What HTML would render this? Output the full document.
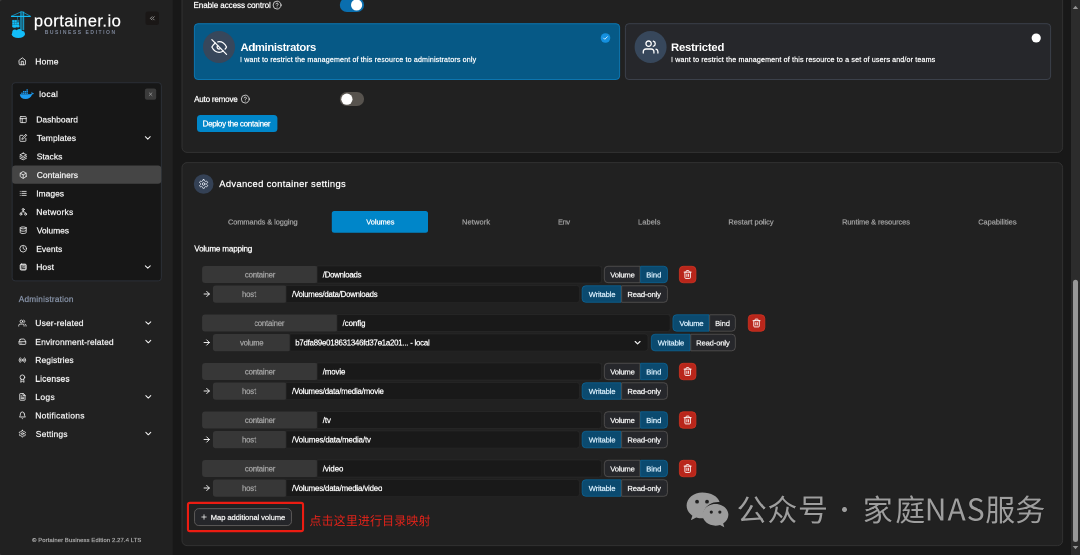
<!DOCTYPE html>
<html lang="zh">
<head>
<meta charset="utf-8">
<title>Portainer</title>
<style>
*{box-sizing:border-box;margin:0;padding:0}
html,body{width:1080px;height:555px;overflow:hidden;background:#181818}
body{position:relative;font-family:"Liberation Sans","Noto Sans CJK SC",sans-serif;color:#fff;font-size:8px}
#bg{position:absolute;left:0;top:0;width:1080px;height:555px}
#tx{position:absolute;left:0;top:0;width:2160px;height:1110px;transform:scale(0.5);transform-origin:0 0;will-change:transform}
.t{position:absolute;white-space:nowrap;-webkit-text-stroke:0.5px currentColor}
</style>
</head>
<body>
<svg id="bg" viewBox="0 0 1080 555">
<rect x="0.00" y="0.00" width="172.80" height="555.00" fill="#212121"/>
<path d="M0 0H2.600A2.600 2.600 0 0 0 0 2.600Z" fill="#3c3c3c"/>
<path d="M0 555H2.600A2.600 2.600 0 0 1 0 552.400Z" fill="#343434"/>
<g transform="translate(10 10)" fill="#13bef9" stroke="none">
<path d="M11.800 1.500 L20.600 6.300 L1.100 6.300 Z" fill="none" stroke="#13bef9" stroke-width="0.650" stroke-linejoin="round"/>
<rect x="1.100" y="5.950" width="19.500" height="1"/>
<rect x="10.700" y="1.800" width="3.200" height="18.400" opacity="0.400"/>
<rect x="10.500" y="1.600" width="0.750" height="18.600"/><rect x="13.400" y="1.600" width="0.750" height="18.600"/>
<rect x="7.400" y="7" width="0.550" height="2.600" opacity="0.800"/>
<rect x="2.200" y="9.900" width="7.200" height="6.600" opacity="0.500"/>
<rect x="2.400" y="10.200" width="1.900" height="1.900"/><rect x="4.700" y="10.200" width="1.900" height="1.900"/>
<rect x="2.400" y="12.500" width="1.900" height="1.900"/><rect x="4.700" y="12.500" width="1.900" height="1.900"/><rect x="7.100" y="12.500" width="1.900" height="1.900"/>
<rect x="2.400" y="14.800" width="6.800" height="1.700"/>
<ellipse cx="4.600" cy="16.600" rx="2.400" ry="1.200"/><ellipse cx="8" cy="16.500" rx="1.600" ry="0.900"/>
<ellipse cx="8.300" cy="24.300" rx="6.500" ry="3.800"/><circle cx="4.800" cy="22" r="2.500"/><circle cx="9.300" cy="21.700" r="2.700"/><circle cx="12.500" cy="23.400" r="2.300"/>
</g>
<rect x="145.50" y="11.50" width="13.50" height="13.50" fill="#1a1716" rx="2.5"/>
<g style="color:#c9c9c9" transform="translate(148.55 14.55) scale(0.3125)" fill="none" stroke="#c9c9c9" stroke-width="2.2" stroke-linecap="round" stroke-linejoin="round"><polyline points="11 17 6 12 11 7"/><polyline points="18 17 13 12 18 7"/></g>
<g style="color:#f5f5f5" transform="translate(18.15 57.15) scale(0.3458)" fill="none" stroke="#f5f5f5" stroke-width="2.4" stroke-linecap="round" stroke-linejoin="round"><path d="m3 9 9-7 9 7v11a2 2 0 0 1-2 2H5a2 2 0 0 1-2-2z"/><polyline points="9 22 9 12 15 12 15 22"/></g>
<rect x="12.15" y="82.75" width="149.20" height="198.10" fill="#171717" rx="3" stroke="#323843" stroke-width="0.7"/>
<g transform="translate(19.800 89.200) scale(0.480)" fill="#1d9bf0">
<path d="M0 10.500h21.500c1.500 0 2.600-.5 3.300-1.600-.6-1-.6-2.400.1-3.500 1.200.8 1.600 1.800 1.700 2.800 1-.2 2 0 2.600.5-.6 1.400-1.900 2.200-3.700 2.300C23.500 17 19 20.500 12 20.500 4.500 20.500.5 16.500 0 10.500z"/>
<rect x="3" y="7" width="3" height="2.800"/><rect x="6.600" y="7" width="3" height="2.800"/><rect x="10.200" y="7" width="3" height="2.800"/><rect x="13.800" y="7" width="3" height="2.800"/>
<rect x="6.600" y="3.600" width="3" height="2.800"/><rect x="10.200" y="3.600" width="3" height="2.800"/><rect x="13.800" y="3.600" width="3" height="2.800"/><rect x="13.800" y="0.200" width="3" height="2.800"/>
</g>
<rect x="144.90" y="88.50" width="11.30" height="11.30" fill="#3b3b3b" rx="2"/>
<g style="color:#bdbdbd" transform="translate(147.85 91.45) scale(0.2292)" fill="none" stroke="#bdbdbd" stroke-width="2.4" stroke-linecap="round" stroke-linejoin="round"><line x1="18" y1="6" x2="6" y2="18"/><line x1="6" y1="6" x2="18" y2="18"/></g>
<rect x="12.10" y="165.50" width="149.10" height="18.30" fill="#454545" rx="3.2"/>
<g style="color:#f5f5f5" transform="translate(19.20 115.60) scale(0.3333)" fill="none" stroke="#f5f5f5" stroke-width="2.4" stroke-linecap="round" stroke-linejoin="round"><rect width="18" height="18" x="3" y="3" rx="2"/><path d="M3 9h18"/><path d="M9 21V9"/></g>
<g style="color:#f5f5f5" transform="translate(19.20 134.00) scale(0.3333)" fill="none" stroke="#f5f5f5" stroke-width="2.4" stroke-linecap="round" stroke-linejoin="round"><path d="M11 4H4a2 2 0 0 0-2 2v14a2 2 0 0 0 2 2h14a2 2 0 0 0 2-2v-7"/><path d="M18.5 2.5a2.121 2.121 0 0 1 3 3L12 15l-4 1 1-4 9.5-9.5z"/></g>
<g style="color:#f2f2f2" transform="translate(142.90 133.00) scale(0.4083)" fill="none" stroke="#f2f2f2" stroke-width="2.5" stroke-linecap="round" stroke-linejoin="round"><polyline points="6 9 12 15 18 9"/></g>
<g style="color:#f5f5f5" transform="translate(19.20 152.50) scale(0.3333)" fill="none" stroke="#f5f5f5" stroke-width="2.4" stroke-linecap="round" stroke-linejoin="round"><polygon points="12 2 2 7 12 12 22 7 12 2"/><polyline points="2 17 12 22 22 17"/><polyline points="2 12 12 17 22 12"/></g>
<g style="color:#f5f5f5" transform="translate(19.20 170.90) scale(0.3333)" fill="none" stroke="#f5f5f5" stroke-width="2.4" stroke-linecap="round" stroke-linejoin="round"><path d="M21 16V8a2 2 0 0 0-1-1.73l-7-4a2 2 0 0 0-2 0l-7 4A2 2 0 0 0 3 8v8a2 2 0 0 0 1 1.73l7 4a2 2 0 0 0 2 0l7-4A2 2 0 0 0 21 16z"/><polyline points="3.27 6.96 12 12.01 20.73 6.96"/><line x1="12" y1="22.08" x2="12" y2="12"/></g>
<g style="color:#f5f5f5" transform="translate(19.20 189.40) scale(0.3333)" fill="none" stroke="#f5f5f5" stroke-width="2.4" stroke-linecap="round" stroke-linejoin="round"><line x1="8" y1="6" x2="21" y2="6"/><line x1="8" y1="12" x2="21" y2="12"/><line x1="8" y1="18" x2="21" y2="18"/><line x1="3" y1="6" x2="3.01" y2="6"/><line x1="3" y1="12" x2="3.01" y2="12"/><line x1="3" y1="18" x2="3.01" y2="18"/></g>
<g style="color:#f5f5f5" transform="translate(19.20 207.80) scale(0.3333)" fill="none" stroke="#f5f5f5" stroke-width="2.4" stroke-linecap="round" stroke-linejoin="round"><circle cx="12" cy="5" r="3"/><circle cx="5" cy="19" r="3"/><circle cx="19" cy="19" r="3"/><path d="M12 8v4M5 16c0-3 3-4 7-4s7 1 7 4"/></g>
<g style="color:#f5f5f5" transform="translate(19.20 226.20) scale(0.3333)" fill="none" stroke="#f5f5f5" stroke-width="2.4" stroke-linecap="round" stroke-linejoin="round"><ellipse cx="12" cy="5" rx="9" ry="3"/><path d="M21 12c0 1.66-4 3-9 3s-9-1.34-9-3"/><path d="M3 5v14c0 1.66 4 3 9 3s9-1.340 9-3V5"/></g>
<g style="color:#f5f5f5" transform="translate(19.20 244.70) scale(0.3333)" fill="none" stroke="#f5f5f5" stroke-width="2.4" stroke-linecap="round" stroke-linejoin="round"><circle cx="12" cy="12" r="10"/><polyline points="12 6 12 12 16 14"/></g>
<g style="color:#f5f5f5" transform="translate(19.20 263.10) scale(0.3333)" fill="none" stroke="#f5f5f5" stroke-width="2.4" stroke-linecap="round" stroke-linejoin="round"><rect x="3" y="3" width="18" height="18" rx="3.500" fill="currentColor" fill-opacity="0.62"/><path d="M8 7.500v8.500h8.500" stroke="#1b1b1b" stroke-width="2.200"/><path d="M12 12.500l4-4" stroke="#1b1b1b" stroke-width="2"/></g>
<g style="color:#f2f2f2" transform="translate(142.90 262.10) scale(0.4083)" fill="none" stroke="#f2f2f2" stroke-width="2.5" stroke-linecap="round" stroke-linejoin="round"><polyline points="6 9 12 15 18 9"/></g>
<g style="color:#f5f5f5" transform="translate(18.40 319.10) scale(0.3333)" fill="none" stroke="#f5f5f5" stroke-width="2.4" stroke-linecap="round" stroke-linejoin="round"><path d="M17 21v-2a4 4 0 0 0-4-4H5a4 4 0 0 0-4 4v2"/><circle cx="9" cy="7" r="4"/><path d="M23 21v-2a4 4 0 0 0-3-3.870"/><path d="M16 3.130a4 4 0 0 1 0 7.750"/></g>
<g style="color:#f2f2f2" transform="translate(143.40 318.10) scale(0.4083)" fill="none" stroke="#f2f2f2" stroke-width="2.5" stroke-linecap="round" stroke-linejoin="round"><polyline points="6 9 12 15 18 9"/></g>
<g style="color:#f5f5f5" transform="translate(18.40 337.70) scale(0.3333)" fill="none" stroke="#f5f5f5" stroke-width="2.4" stroke-linecap="round" stroke-linejoin="round"><line x1="22" y1="12" x2="2" y2="12"/><path d="M5.450 5.110 2 12v6a2 2 0 0 0 2 2h16a2 2 0 0 0 2-2v-6l-3.450-6.890A2 2 0 0 0 16.760 4H7.240a2 2 0 0 0-1.790 1.110z"/><line x1="6" y1="16" x2="6.010" y2="16"/><line x1="10" y1="16" x2="10.010" y2="16"/></g>
<g style="color:#f2f2f2" transform="translate(143.40 336.70) scale(0.4083)" fill="none" stroke="#f2f2f2" stroke-width="2.5" stroke-linecap="round" stroke-linejoin="round"><polyline points="6 9 12 15 18 9"/></g>
<g style="color:#f5f5f5" transform="translate(18.40 356.10) scale(0.3333)" fill="none" stroke="#f5f5f5" stroke-width="2.4" stroke-linecap="round" stroke-linejoin="round"><circle cx="12" cy="12" r="2"/><path d="M16.240 7.760a6 6 0 0 1 0 8.490m-8.480-.010a6 6 0 0 1 0-8.490m11.310-2.820a10 10 0 0 1 0 14.140m-14.140 0a10 10 0 0 1 0-14.140"/></g>
<g style="color:#f5f5f5" transform="translate(18.40 374.60) scale(0.3333)" fill="none" stroke="#f5f5f5" stroke-width="2.4" stroke-linecap="round" stroke-linejoin="round"><circle cx="12" cy="8" r="7"/><polyline points="8.210 13.890 7 23 12 20 17 23 15.790 13.880"/></g>
<g style="color:#f5f5f5" transform="translate(18.40 392.90) scale(0.3333)" fill="none" stroke="#f5f5f5" stroke-width="2.4" stroke-linecap="round" stroke-linejoin="round"><path d="M14 2H6a2 2 0 0 0-2 2v16a2 2 0 0 0 2 2h12a2 2 0 0 0 2-2V8z"/><polyline points="14 2 14 8 20 8"/><line x1="16" y1="13" x2="8" y2="13"/><line x1="16" y1="17" x2="8" y2="17"/><line x1="10" y1="9" x2="8" y2="9"/></g>
<g style="color:#f2f2f2" transform="translate(143.40 391.90) scale(0.4083)" fill="none" stroke="#f2f2f2" stroke-width="2.5" stroke-linecap="round" stroke-linejoin="round"><polyline points="6 9 12 15 18 9"/></g>
<g style="color:#f5f5f5" transform="translate(18.40 411.30) scale(0.3333)" fill="none" stroke="#f5f5f5" stroke-width="2.4" stroke-linecap="round" stroke-linejoin="round"><path d="M18 8A6 6 0 0 0 6 8c0 7-3 9-3 9h18s-3-2-3-9"/><path d="M13.730 21a2 2 0 0 1-3.460 0"/></g>
<g style="color:#f5f5f5" transform="translate(18.40 429.70) scale(0.3333)" fill="none" stroke="#f5f5f5" stroke-width="2.4" stroke-linecap="round" stroke-linejoin="round"><path d="M12.220 2h-.44a2 2 0 0 0-2 2v.18a2 2 0 0 1-1 1.730l-.43.25a2 2 0 0 1-2 0l-.15-.08a2 2 0 0 0-2.730.730l-.22.38a2 2 0 0 0 .73 2.730l.15.1a2 2 0 0 1 1 1.720v.51a2 2 0 0 1-1 1.740l-.15.09a2 2 0 0 0-.73 2.730l.22.38a2 2 0 0 0 2.730.730l.15-.08a2 2 0 0 1 2 0l.43.25a2 2 0 0 1 1 1.730V20a2 2 0 0 0 2 2h.44a2 2 0 0 0 2-2v-.18a2 2 0 0 1 1-1.730l.43-.25a2 2 0 0 1 2 0l.15.08a2 2 0 0 0 2.730-.73l.22-.39a2 2 0 0 0-.73-2.730l-.15-.08a2 2 0 0 1-1-1.740v-.5a2 2 0 0 1 1-1.740l.15-.09a2 2 0 0 0 .73-2.730l-.22-.38a2 2 0 0 0-2.730-.73l-.15.08a2 2 0 0 1-2 0l-.43-.25a2 2 0 0 1-1-1.730V4a2 2 0 0 0-2-2z"/><circle cx="12" cy="12" r="3"/></g>
<g style="color:#f2f2f2" transform="translate(143.40 428.70) scale(0.4083)" fill="none" stroke="#f2f2f2" stroke-width="2.5" stroke-linecap="round" stroke-linejoin="round"><polyline points="6 9 12 15 18 9"/></g>
<rect x="182.00" y="-9.60" width="880.60" height="162.00" fill="#212121" rx="5" stroke="#373737" stroke-width="0.8"/>
<g style="color:#f0f0f0" transform="translate(272.35 0.35) scale(0.3958)" fill="none" stroke="#f0f0f0" stroke-width="2" stroke-linecap="round" stroke-linejoin="round"><circle cx="12" cy="12" r="10"/><path d="M9.090 9a3 3 0 0 1 5.830 1c0 2-3 3-3 3"/><line x1="12" y1="17" x2="12.010" y2="17"/></g>
<rect x="339.80" y="-2.20" width="24.30" height="14.30" fill="#0a6eae" rx="7.1"/>
<circle cx="356.60" cy="5.00" r="5.60" fill="#fff"/>
<rect x="194.40" y="23.70" width="425.20" height="55.80" fill="#065986" rx="3.5" stroke="#0b84c6" stroke-width="0.8"/>
<circle cx="219.00" cy="47.00" r="16.00" fill="#37475b"/>
<g style="color:#fff" transform="translate(211.20 39.00) scale(0.6667)" fill="none" stroke="#fff" stroke-width="1.9" stroke-linecap="round" stroke-linejoin="round"><path d="M17.940 17.940A10.070 10.070 0 0 1 12 20c-7 0-11-8-11-8a18.450 18.450 0 0 1 5.060-5.940M9.900 4.240A9.120 9.120 0 0 1 12 4c7 0 11 8 11 8a18.500 18.500 0 0 1-2.160 3.190m-6.720-1.070a3 3 0 1 1-4.240-4.240"/><line x1="1" y1="1" x2="23" y2="23"/></g>
<circle cx="605.50" cy="38.00" r="4.80" fill="#1591e0"/>
<g style="color:#fff" transform="translate(602.70 35.30) scale(0.2333)" fill="none" stroke="#fff" stroke-width="3.2" stroke-linecap="round" stroke-linejoin="round"><polyline points="20 6 9 17 4 12"/></g>
<rect x="625.40" y="23.70" width="425.20" height="55.80" fill="#26272b" rx="3.5" stroke="#414854" stroke-width="0.8"/>
<circle cx="650.60" cy="47.00" r="16.00" fill="#37475b"/>
<g style="color:#fff" transform="translate(642.60 39.00) scale(0.6667)" fill="none" stroke="#fff" stroke-width="1.9" stroke-linecap="round" stroke-linejoin="round"><path d="M17 21v-2a4 4 0 0 0-4-4H5a4 4 0 0 0-4 4v2"/><circle cx="9" cy="7" r="4"/><path d="M23 21v-2a4 4 0 0 0-3-3.870"/><path d="M16 3.130a4 4 0 0 1 0 7.750"/></g>
<circle cx="1036.20" cy="38.00" r="4.60" fill="#fff"/>
<g style="color:#f0f0f0" transform="translate(240.55 94.35) scale(0.3958)" fill="none" stroke="#f0f0f0" stroke-width="2" stroke-linecap="round" stroke-linejoin="round"><circle cx="12" cy="12" r="10"/><path d="M9.090 9a3 3 0 0 1 5.830 1c0 2-3 3-3 3"/><line x1="12" y1="17" x2="12.010" y2="17"/></g>
<rect x="339.80" y="92.00" width="24.30" height="14.10" fill="#57534e" rx="7.1"/>
<circle cx="346.90" cy="99.20" r="5.60" fill="#fff"/>
<rect x="197.00" y="114.90" width="80.40" height="17.20" fill="#0086c9" rx="3.5"/>
<rect x="182.00" y="162.60" width="880.60" height="383.00" fill="#212121" rx="5" stroke="#373737" stroke-width="0.8"/>
<circle cx="203.65" cy="184.00" r="9.85" fill="#344155"/>
<g style="color:#eef3fc" transform="translate(198.30 178.70) scale(0.4417)" fill="none" stroke="#eef3fc" stroke-width="1.9" stroke-linecap="round" stroke-linejoin="round"><path d="M12.220 2h-.44a2 2 0 0 0-2 2v.18a2 2 0 0 1-1 1.730l-.43.25a2 2 0 0 1-2 0l-.15-.08a2 2 0 0 0-2.730.730l-.22.38a2 2 0 0 0 .73 2.730l.15.1a2 2 0 0 1 1 1.720v.51a2 2 0 0 1-1 1.740l-.15.09a2 2 0 0 0-.73 2.730l.22.38a2 2 0 0 0 2.730.730l.15-.08a2 2 0 0 1 2 0l.43.25a2 2 0 0 1 1 1.730V20a2 2 0 0 0 2 2h.44a2 2 0 0 0 2-2v-.18a2 2 0 0 1 1-1.730l.43-.25a2 2 0 0 1 2 0l.15.08a2 2 0 0 0 2.730-.73l.22-.39a2 2 0 0 0-.73-2.730l-.15-.08a2 2 0 0 1-1-1.740v-.5a2 2 0 0 1 1-1.740l.15-.09a2 2 0 0 0 .73-2.730l-.22-.38a2 2 0 0 0-2.730-.73l-.15.08a2 2 0 0 1-2 0l-.43-.25a2 2 0 0 1-1-1.730V4a2 2 0 0 0-2-2z"/><circle cx="12" cy="12" r="3"/></g>
<rect x="331.80" y="211.00" width="96.20" height="21.70" fill="#0086c9" rx="2.5"/>
<rect x="202.10" y="265.90" width="116.10" height="17.15" fill="#373737" rx="3"/>
<rect x="317.50" y="266.20" width="283.80" height="16.55" fill="#191919" stroke="#2b2b2b" stroke-width="0.6"/>
<path d="M317.2 265.9H598.6A3 3 0 0 1 601.6 268.9V280.04999999999995A3 3 0 0 1 598.6 283.04999999999995H317.2Z" fill="#191919" stroke="#2b2b2b" stroke-width="0.6"/>
<path d="M639.9499999999999 266.25H607.95A3.6 3.6 0 0 0 604.35 269.85V279.0999999999999A3.6 3.6 0 0 0 607.95 282.69999999999993H639.9499999999999Z" fill="#26272b" stroke="#5e5b5a" stroke-width="0.7"/>
<path d="M640.65 266.25H663.8499999999999A3.6 3.6 0 0 1 667.4499999999999 269.85V279.0999999999999A3.6 3.6 0 0 1 663.8499999999999 282.69999999999993H640.65Z" fill="#0b4a6f" stroke="#0a6a9f" stroke-width="0.7"/>
<rect x="679.40" y="266.30" width="16.50" height="16.45" fill="#b9261b" rx="3.8" stroke="#d23421" stroke-width="0.8"/>
<g style="color:#fff" transform="translate(682.95 269.80) scale(0.3917)" fill="none" stroke="#fff" stroke-width="2.3" stroke-linecap="round" stroke-linejoin="round"><polyline points="3 6 5 6 21 6"/><path d="M19 6v14a2 2 0 0 1-2 2H7a2 2 0 0 1-2-2V6m3 0V4a2 2 0 0 1 2-2h4a2 2 0 0 1 2 2v2"/><line x1="10" y1="11" x2="10" y2="17"/><line x1="14" y1="11" x2="14" y2="17"/></g>
<g style="color:#f4f4f4" transform="translate(202.20 289.50) scale(0.3750)" fill="none" stroke="#f4f4f4" stroke-width="2.5" stroke-linecap="round" stroke-linejoin="round"><line x1="5" y1="12" x2="19" y2="12"/><polyline points="12 5 19 12 12 19"/></g>
<rect x="212.90" y="285.40" width="74.20" height="17.25" fill="#373737" rx="3"/>
<path d="M286.1 285.4H576.6A3 3 0 0 1 579.6 288.4V299.65A3 3 0 0 1 576.6 302.65H286.1Z" fill="#191919" stroke="#2b2b2b" stroke-width="0.6"/>
<path d="M620.9499999999999 285.75H585.75A3.6 3.6 0 0 0 582.15 289.35V298.69999999999993A3.6 3.6 0 0 0 585.75 302.29999999999995H620.9499999999999Z" fill="#0b4a6f" stroke="#0a6a9f" stroke-width="0.7"/>
<path d="M621.65 285.75H663.8499999999999A3.6 3.6 0 0 1 667.4499999999999 289.35V298.69999999999993A3.6 3.6 0 0 1 663.8499999999999 302.29999999999995H621.65Z" fill="#26272b" stroke="#5e5b5a" stroke-width="0.7"/>
<rect x="202.10" y="314.40" width="135.90" height="17.15" fill="#373737" rx="3"/>
<rect x="337.30" y="314.70" width="332.60" height="16.55" fill="#191919" stroke="#2b2b2b" stroke-width="0.6"/>
<path d="M337 314.4H667.2A3 3 0 0 1 670.2 317.4V328.54999999999995A3 3 0 0 1 667.2 331.54999999999995H337Z" fill="#191919" stroke="#2b2b2b" stroke-width="0.6"/>
<path d="M708.9499999999999 314.75H676.5500000000001A3.6 3.6 0 0 0 672.95 318.35V327.5999999999999A3.6 3.6 0 0 0 676.5500000000001 331.19999999999993H708.9499999999999Z" fill="#0b4a6f" stroke="#0a6a9f" stroke-width="0.7"/>
<path d="M709.65 314.75H731.7499999999999A3.6 3.6 0 0 1 735.3499999999999 318.35V327.5999999999999A3.6 3.6 0 0 1 731.7499999999999 331.19999999999993H709.65Z" fill="#26272b" stroke="#5e5b5a" stroke-width="0.7"/>
<rect x="748.30" y="314.80" width="16.50" height="16.45" fill="#b9261b" rx="3.8" stroke="#d23421" stroke-width="0.8"/>
<g style="color:#fff" transform="translate(751.85 318.30) scale(0.3917)" fill="none" stroke="#fff" stroke-width="2.3" stroke-linecap="round" stroke-linejoin="round"><polyline points="3 6 5 6 21 6"/><path d="M19 6v14a2 2 0 0 1-2 2H7a2 2 0 0 1-2-2V6m3 0V4a2 2 0 0 1 2-2h4a2 2 0 0 1 2 2v2"/><line x1="10" y1="11" x2="10" y2="17"/><line x1="14" y1="11" x2="14" y2="17"/></g>
<g style="color:#f4f4f4" transform="translate(202.20 338.00) scale(0.3750)" fill="none" stroke="#f4f4f4" stroke-width="2.5" stroke-linecap="round" stroke-linejoin="round"><line x1="5" y1="12" x2="19" y2="12"/><polyline points="12 5 19 12 12 19"/></g>
<rect x="212.90" y="333.90" width="78.00" height="17.25" fill="#373737" rx="3"/>
<path d="M289.9 333.9H645A3 3 0 0 1 648 336.9V348.15A3 3 0 0 1 645 351.15H289.9Z" fill="#191919" stroke="#2b2b2b" stroke-width="0.6"/>
<g style="color:#f2f2f2" transform="translate(632.80 337.90) scale(0.4000)" fill="none" stroke="#f2f2f2" stroke-width="2.9" stroke-linecap="round" stroke-linejoin="round"><polyline points="6 9 12 15 18 9"/></g>
<path d="M690.05 334.25H654.95A3.6 3.6 0 0 0 651.35 337.85V347.19999999999993A3.6 3.6 0 0 0 654.95 350.79999999999995H690.05Z" fill="#0b4a6f" stroke="#0a6a9f" stroke-width="0.7"/>
<path d="M690.75 334.25H731.7499999999999A3.6 3.6 0 0 1 735.3499999999999 337.85V347.19999999999993A3.6 3.6 0 0 1 731.7499999999999 350.79999999999995H690.75Z" fill="#26272b" stroke="#5e5b5a" stroke-width="0.7"/>
<rect x="202.10" y="362.90" width="116.10" height="17.15" fill="#373737" rx="3"/>
<rect x="317.50" y="363.20" width="283.80" height="16.55" fill="#191919" stroke="#2b2b2b" stroke-width="0.6"/>
<path d="M317.2 362.9H598.6A3 3 0 0 1 601.6 365.9V377.04999999999995A3 3 0 0 1 598.6 380.04999999999995H317.2Z" fill="#191919" stroke="#2b2b2b" stroke-width="0.6"/>
<path d="M639.9499999999999 363.25H607.95A3.6 3.6 0 0 0 604.35 366.85V376.0999999999999A3.6 3.6 0 0 0 607.95 379.69999999999993H639.9499999999999Z" fill="#26272b" stroke="#5e5b5a" stroke-width="0.7"/>
<path d="M640.65 363.25H663.8499999999999A3.6 3.6 0 0 1 667.4499999999999 366.85V376.0999999999999A3.6 3.6 0 0 1 663.8499999999999 379.69999999999993H640.65Z" fill="#0b4a6f" stroke="#0a6a9f" stroke-width="0.7"/>
<rect x="679.40" y="363.30" width="16.50" height="16.45" fill="#b9261b" rx="3.8" stroke="#d23421" stroke-width="0.8"/>
<g style="color:#fff" transform="translate(682.95 366.80) scale(0.3917)" fill="none" stroke="#fff" stroke-width="2.3" stroke-linecap="round" stroke-linejoin="round"><polyline points="3 6 5 6 21 6"/><path d="M19 6v14a2 2 0 0 1-2 2H7a2 2 0 0 1-2-2V6m3 0V4a2 2 0 0 1 2-2h4a2 2 0 0 1 2 2v2"/><line x1="10" y1="11" x2="10" y2="17"/><line x1="14" y1="11" x2="14" y2="17"/></g>
<g style="color:#f4f4f4" transform="translate(202.20 386.50) scale(0.3750)" fill="none" stroke="#f4f4f4" stroke-width="2.5" stroke-linecap="round" stroke-linejoin="round"><line x1="5" y1="12" x2="19" y2="12"/><polyline points="12 5 19 12 12 19"/></g>
<rect x="212.90" y="382.40" width="74.20" height="17.25" fill="#373737" rx="3"/>
<path d="M286.1 382.4H576.6A3 3 0 0 1 579.6 385.4V396.65A3 3 0 0 1 576.6 399.65H286.1Z" fill="#191919" stroke="#2b2b2b" stroke-width="0.6"/>
<path d="M620.9499999999999 382.75H585.75A3.6 3.6 0 0 0 582.15 386.35V395.69999999999993A3.6 3.6 0 0 0 585.75 399.29999999999995H620.9499999999999Z" fill="#0b4a6f" stroke="#0a6a9f" stroke-width="0.7"/>
<path d="M621.65 382.75H663.8499999999999A3.6 3.6 0 0 1 667.4499999999999 386.35V395.69999999999993A3.6 3.6 0 0 1 663.8499999999999 399.29999999999995H621.65Z" fill="#26272b" stroke="#5e5b5a" stroke-width="0.7"/>
<rect x="202.10" y="411.40" width="116.10" height="17.15" fill="#373737" rx="3"/>
<rect x="317.50" y="411.70" width="283.80" height="16.55" fill="#191919" stroke="#2b2b2b" stroke-width="0.6"/>
<path d="M317.2 411.4H598.6A3 3 0 0 1 601.6 414.4V425.54999999999995A3 3 0 0 1 598.6 428.54999999999995H317.2Z" fill="#191919" stroke="#2b2b2b" stroke-width="0.6"/>
<path d="M639.9499999999999 411.75H607.95A3.6 3.6 0 0 0 604.35 415.35V424.5999999999999A3.6 3.6 0 0 0 607.95 428.19999999999993H639.9499999999999Z" fill="#26272b" stroke="#5e5b5a" stroke-width="0.7"/>
<path d="M640.65 411.75H663.8499999999999A3.6 3.6 0 0 1 667.4499999999999 415.35V424.5999999999999A3.6 3.6 0 0 1 663.8499999999999 428.19999999999993H640.65Z" fill="#0b4a6f" stroke="#0a6a9f" stroke-width="0.7"/>
<rect x="679.40" y="411.80" width="16.50" height="16.45" fill="#b9261b" rx="3.8" stroke="#d23421" stroke-width="0.8"/>
<g style="color:#fff" transform="translate(682.95 415.30) scale(0.3917)" fill="none" stroke="#fff" stroke-width="2.3" stroke-linecap="round" stroke-linejoin="round"><polyline points="3 6 5 6 21 6"/><path d="M19 6v14a2 2 0 0 1-2 2H7a2 2 0 0 1-2-2V6m3 0V4a2 2 0 0 1 2-2h4a2 2 0 0 1 2 2v2"/><line x1="10" y1="11" x2="10" y2="17"/><line x1="14" y1="11" x2="14" y2="17"/></g>
<g style="color:#f4f4f4" transform="translate(202.20 435.00) scale(0.3750)" fill="none" stroke="#f4f4f4" stroke-width="2.5" stroke-linecap="round" stroke-linejoin="round"><line x1="5" y1="12" x2="19" y2="12"/><polyline points="12 5 19 12 12 19"/></g>
<rect x="212.90" y="430.90" width="74.20" height="17.25" fill="#373737" rx="3"/>
<path d="M286.1 430.9H576.6A3 3 0 0 1 579.6 433.9V445.15A3 3 0 0 1 576.6 448.15H286.1Z" fill="#191919" stroke="#2b2b2b" stroke-width="0.6"/>
<path d="M620.9499999999999 431.25H585.75A3.6 3.6 0 0 0 582.15 434.85V444.19999999999993A3.6 3.6 0 0 0 585.75 447.79999999999995H620.9499999999999Z" fill="#0b4a6f" stroke="#0a6a9f" stroke-width="0.7"/>
<path d="M621.65 431.25H663.8499999999999A3.6 3.6 0 0 1 667.4499999999999 434.85V444.19999999999993A3.6 3.6 0 0 1 663.8499999999999 447.79999999999995H621.65Z" fill="#26272b" stroke="#5e5b5a" stroke-width="0.7"/>
<rect x="202.10" y="459.90" width="116.10" height="17.15" fill="#373737" rx="3"/>
<rect x="317.50" y="460.20" width="283.80" height="16.55" fill="#191919" stroke="#2b2b2b" stroke-width="0.6"/>
<path d="M317.2 459.9H598.6A3 3 0 0 1 601.6 462.9V474.04999999999995A3 3 0 0 1 598.6 477.04999999999995H317.2Z" fill="#191919" stroke="#2b2b2b" stroke-width="0.6"/>
<path d="M639.9499999999999 460.25H607.95A3.6 3.6 0 0 0 604.35 463.85V473.0999999999999A3.6 3.6 0 0 0 607.95 476.69999999999993H639.9499999999999Z" fill="#26272b" stroke="#5e5b5a" stroke-width="0.7"/>
<path d="M640.65 460.25H663.8499999999999A3.6 3.6 0 0 1 667.4499999999999 463.85V473.0999999999999A3.6 3.6 0 0 1 663.8499999999999 476.69999999999993H640.65Z" fill="#0b4a6f" stroke="#0a6a9f" stroke-width="0.7"/>
<rect x="679.40" y="460.30" width="16.50" height="16.45" fill="#b9261b" rx="3.8" stroke="#d23421" stroke-width="0.8"/>
<g style="color:#fff" transform="translate(682.95 463.80) scale(0.3917)" fill="none" stroke="#fff" stroke-width="2.3" stroke-linecap="round" stroke-linejoin="round"><polyline points="3 6 5 6 21 6"/><path d="M19 6v14a2 2 0 0 1-2 2H7a2 2 0 0 1-2-2V6m3 0V4a2 2 0 0 1 2-2h4a2 2 0 0 1 2 2v2"/><line x1="10" y1="11" x2="10" y2="17"/><line x1="14" y1="11" x2="14" y2="17"/></g>
<g style="color:#f4f4f4" transform="translate(202.20 483.50) scale(0.3750)" fill="none" stroke="#f4f4f4" stroke-width="2.5" stroke-linecap="round" stroke-linejoin="round"><line x1="5" y1="12" x2="19" y2="12"/><polyline points="12 5 19 12 12 19"/></g>
<rect x="212.90" y="479.40" width="74.20" height="17.25" fill="#373737" rx="3"/>
<path d="M286.1 479.4H576.6A3 3 0 0 1 579.6 482.4V493.65A3 3 0 0 1 576.6 496.65H286.1Z" fill="#191919" stroke="#2b2b2b" stroke-width="0.6"/>
<path d="M620.9499999999999 479.75H585.75A3.6 3.6 0 0 0 582.15 483.35V492.69999999999993A3.6 3.6 0 0 0 585.75 496.29999999999995H620.9499999999999Z" fill="#0b4a6f" stroke="#0a6a9f" stroke-width="0.7"/>
<path d="M621.65 479.75H663.8499999999999A3.6 3.6 0 0 1 667.4499999999999 483.35V492.69999999999993A3.6 3.6 0 0 1 663.8499999999999 496.29999999999995H621.65Z" fill="#26272b" stroke="#5e5b5a" stroke-width="0.7"/>
<rect x="194.55" y="508.65" width="96.90" height="16.90" fill="#25262a" rx="4.2" stroke="#625f5d" stroke-width="0.9"/>
<g style="color:#fff" transform="translate(200.20 513.20) scale(0.3167)" fill="none" stroke="#fff" stroke-width="2.3" stroke-linecap="round" stroke-linejoin="round"><line x1="12" y1="5" x2="12" y2="19"/><line x1="5" y1="12" x2="19" y2="12"/></g>
<rect x="187.95" y="502.85" width="115.10" height="28.30" fill="none" rx="2" stroke="#ec1c12" stroke-width="2.1"/>
<rect x="1071.00" y="0.00" width="9.00" height="555.00" fill="#2c2c2c"/>
<rect x="1073.00" y="279.80" width="5.00" height="262.20" fill="#979797" rx="2.5"/>
<path d="M1075.500 5.800 L1078.200 9 L1072.800 9Z" fill="#949494"/>
<path d="M1075.500 549.200 L1078.300 546 L1072.700 546Z" fill="#949494"/>
<g transform="translate(686.600 492.600) scale(0.950)" fill="#9c9c9c">
<path d="M16.500 0C7.400 0 0 6.100 0 13.700c0 4.300 2.400 8.100 6.100 10.600L4.500 29l5.600-2.900c2 .6 4.100 .9 6.400 .9 .600 0 1.100 0 1.700-.1-.4-1.200-.6-2.500-.6-3.800 0-7.300 7-13.200 15.600-13.200 .500 0 1 0 1.500 .1C33.200 4.200 25.600 0 16.500 0z"/>
<path d="M44 23.400c0-6.300-6.100-11.400-13.600-11.400s-13.600 5.100-13.600 11.400 6.100 11.400 13.600 11.400c1.700 0 3.300-.3 4.800-.7l4.500 2.400-1.200-3.900c3.300-2.100 5.500-5.400 5.500-9.200z"/>
<circle cx="11" cy="9.500" r="2" fill="#212121"/><circle cx="21.500" cy="9.500" r="2" fill="#212121"/><circle cx="26" cy="20.500" r="1.700" fill="#212121"/><circle cx="35" cy="20.500" r="1.700" fill="#212121"/>
</g>
</svg>
<div id="tx">
<div class="t" style="left:67.80px;top:23.09px;height:37.00px;line-height:37.00px;font-size:33.20px;color:#fff;letter-spacing:0.878px;">portainer.io</div>
<div class="t" style="left:89.40px;top:58.58px;height:11.00px;line-height:11.00px;font-size:10.00px;color:#7d8699;letter-spacing:3.091px;font-weight:700;-webkit-text-stroke:0;">BUSINESS EDITION</div>
<div class="t" style="left:70.60px;top:113.89px;height:19.00px;line-height:19.00px;font-size:17.00px;color:#f2f2f2;letter-spacing:0.302px;">Home</div>
<div class="t" style="left:78.20px;top:179.09px;height:19.00px;line-height:19.00px;font-size:17.00px;color:#fff;letter-spacing:0.653px;">local</div>
<div class="t" style="left:72.40px;top:230.49px;height:19.00px;line-height:19.00px;font-size:17.00px;color:#f2f2f2;letter-spacing:0.036px;">Dashboard</div>
<div class="t" style="left:73.40px;top:267.29px;height:19.00px;line-height:19.00px;font-size:17.00px;color:#f2f2f2;letter-spacing:0.128px;">Templates</div>
<div class="t" style="left:73.40px;top:304.29px;height:19.00px;line-height:19.00px;font-size:17.00px;color:#f2f2f2;letter-spacing:0.057px;">Stacks</div>
<div class="t" style="left:73.40px;top:341.09px;height:19.00px;line-height:19.00px;font-size:17.00px;color:#f2f2f2;letter-spacing:0.032px;">Containers</div>
<div class="t" style="left:72.40px;top:378.09px;height:19.00px;line-height:19.00px;font-size:17.00px;color:#f2f2f2;letter-spacing:-0.010px;">Images</div>
<div class="t" style="left:72.40px;top:414.89px;height:19.00px;line-height:19.00px;font-size:17.00px;color:#f2f2f2;letter-spacing:0.465px;">Networks</div>
<div class="t" style="left:73.40px;top:451.69px;height:19.00px;line-height:19.00px;font-size:17.00px;color:#f2f2f2;letter-spacing:-0.084px;">Volumes</div>
<div class="t" style="left:72.40px;top:488.69px;height:19.00px;line-height:19.00px;font-size:17.00px;color:#f2f2f2;letter-spacing:0.026px;">Events</div>
<div class="t" style="left:72.40px;top:525.49px;height:19.00px;line-height:19.00px;font-size:17.00px;color:#f2f2f2;letter-spacing:0.190px;">Host</div>
<div class="t" style="left:37.60px;top:588.87px;height:18.00px;line-height:18.00px;font-size:16.40px;color:#8793a8;letter-spacing:0.420px;">Administration</div>
<div class="t" style="left:70.60px;top:637.49px;height:19.00px;line-height:19.00px;font-size:17.00px;color:#f2f2f2;letter-spacing:0.266px;">User-related</div>
<div class="t" style="left:70.60px;top:674.69px;height:19.00px;line-height:19.00px;font-size:17.00px;color:#f2f2f2;letter-spacing:0.199px;">Environment-related</div>
<div class="t" style="left:70.60px;top:711.49px;height:19.00px;line-height:19.00px;font-size:17.00px;color:#f2f2f2;letter-spacing:0.125px;">Registries</div>
<div class="t" style="left:70.60px;top:748.49px;height:19.00px;line-height:19.00px;font-size:17.00px;color:#f2f2f2;letter-spacing:0.229px;">Licenses</div>
<div class="t" style="left:70.60px;top:785.09px;height:19.00px;line-height:19.00px;font-size:17.00px;color:#f2f2f2;letter-spacing:0.679px;">Logs</div>
<div class="t" style="left:70.60px;top:821.89px;height:19.00px;line-height:19.00px;font-size:17.00px;color:#f2f2f2;letter-spacing:0.475px;">Notifications</div>
<div class="t" style="left:71.60px;top:858.69px;height:19.00px;line-height:19.00px;font-size:17.00px;color:#f2f2f2;letter-spacing:0.296px;">Settings</div>
<div class="t" style="left:64.20px;top:1072.55px;height:13.00px;line-height:13.00px;font-size:11.60px;color:#a9a9a9;letter-spacing:0.303px;">© Portainer Business Edition 2.27.4 LTS</div>
<div class="t" style="left:387.00px;top:1.00px;height:18.00px;line-height:18.00px;font-size:16.20px;color:#fff;letter-spacing:-0.188px;">Enable access control</div>
<div class="t" style="left:481.00px;top:82.09px;height:25.00px;line-height:25.00px;font-size:22.60px;color:#fff;letter-spacing:-0.702px;font-weight:700;-webkit-text-stroke:0;">Administrators</div>
<div class="t" style="left:480.00px;top:110.88px;height:16.00px;line-height:16.00px;font-size:14.20px;color:#fff;letter-spacing:0.306px;">I want to restrict the management of this resource to administrators only</div>
<div class="t" style="left:1342.00px;top:82.09px;height:25.00px;line-height:25.00px;font-size:22.60px;color:#fff;letter-spacing:-0.411px;font-weight:700;-webkit-text-stroke:0;">Restricted</div>
<div class="t" style="left:1342.00px;top:110.88px;height:16.00px;line-height:16.00px;font-size:14.20px;color:#fff;letter-spacing:0.317px;">I want to restrict the management of this resource to a set of users and/or teams</div>
<div class="t" style="left:388.20px;top:189.00px;height:18.00px;line-height:18.00px;font-size:16.20px;color:#fff;letter-spacing:-0.437px;">Auto remove</div>
<div class="t" style="left:405.20px;top:238.73px;height:17.00px;line-height:17.00px;font-size:16.00px;color:#fff;letter-spacing:-0.570px;">Deploy the container</div>
<div class="t" style="left:438.60px;top:357.33px;height:21.00px;line-height:21.00px;font-size:18.80px;color:#fff;letter-spacing:0.647px;">Advanced container settings</div>
<div class="t" style="left:456.00px;top:435.50px;height:16.00px;line-height:16.00px;font-size:14.80px;color:#a0a0a0;letter-spacing:-0.132px;">Commands &amp; logging</div>
<div class="t" style="left:732.60px;top:435.50px;height:16.00px;line-height:16.00px;font-size:14.80px;color:#fff;letter-spacing:-0.092px;">Volumes</div>
<div class="t" style="left:924.00px;top:435.50px;height:16.00px;line-height:16.00px;font-size:14.80px;color:#a0a0a0;letter-spacing:0.322px;">Network</div>
<div class="t" style="left:1116.00px;top:435.50px;height:16.00px;line-height:16.00px;font-size:14.80px;color:#a0a0a0;letter-spacing:-0.649px;">Env</div>
<div class="t" style="left:1276.00px;top:435.50px;height:16.00px;line-height:16.00px;font-size:14.80px;color:#a0a0a0;letter-spacing:0.239px;">Labels</div>
<div class="t" style="left:1456.80px;top:435.50px;height:16.00px;line-height:16.00px;font-size:14.80px;color:#a0a0a0;letter-spacing:0.059px;">Restart policy</div>
<div class="t" style="left:1684.20px;top:435.50px;height:16.00px;line-height:16.00px;font-size:14.80px;color:#a0a0a0;letter-spacing:-0.142px;">Runtime &amp; resources</div>
<div class="t" style="left:1956.40px;top:435.50px;height:16.00px;line-height:16.00px;font-size:14.80px;color:#a0a0a0;letter-spacing:-0.008px;">Capabilities</div>
<div class="t" style="left:388.60px;top:488.40px;height:18.00px;line-height:18.00px;font-size:16.20px;color:#fff;letter-spacing:-0.352px;">Volume mapping</div>
<div class="t" style="left:489.80px;top:540.58px;height:17.00px;line-height:17.00px;font-size:15.60px;color:#a3a3a3;letter-spacing:-0.420px;">container</div>
<div class="t" style="left:645.60px;top:541.38px;height:17.00px;line-height:17.00px;font-size:15.60px;color:#fff;letter-spacing:-0.454px;">/Downloads</div>
<div class="t" style="left:1220.60px;top:540.79px;height:17.00px;line-height:17.00px;font-size:15.20px;color:#f3f3f3;letter-spacing:-0.322px;">Volume</div>
<div class="t" style="left:1292.60px;top:540.79px;height:17.00px;line-height:17.00px;font-size:15.20px;color:#d5ecfa;letter-spacing:-0.117px;">Bind</div>
<div class="t" style="left:484.00px;top:579.58px;height:17.00px;line-height:17.00px;font-size:15.60px;color:#a3a3a3;letter-spacing:-0.381px;">host</div>
<div class="t" style="left:584.00px;top:580.38px;height:17.00px;line-height:17.00px;font-size:15.60px;color:#fff;letter-spacing:-0.414px;">/Volumes/data/Downloads</div>
<div class="t" style="left:1177.40px;top:579.89px;height:17.00px;line-height:17.00px;font-size:15.20px;color:#d5ecfa;letter-spacing:-0.283px;">Writable</div>
<div class="t" style="left:1254.80px;top:579.89px;height:17.00px;line-height:17.00px;font-size:15.20px;color:#f3f3f3;letter-spacing:-0.279px;">Read-only</div>
<div class="t" style="left:508.20px;top:637.58px;height:17.00px;line-height:17.00px;font-size:15.60px;color:#a3a3a3;letter-spacing:-0.420px;">container</div>
<div class="t" style="left:685.20px;top:638.38px;height:17.00px;line-height:17.00px;font-size:15.60px;color:#fff;letter-spacing:-0.045px;">/config</div>
<div class="t" style="left:1358.80px;top:637.79px;height:17.00px;line-height:17.00px;font-size:15.20px;color:#d5ecfa;letter-spacing:-0.442px;">Volume</div>
<div class="t" style="left:1430.20px;top:637.79px;height:17.00px;line-height:17.00px;font-size:15.20px;color:#f3f3f3;letter-spacing:-0.250px;">Bind</div>
<div class="t" style="left:480.00px;top:676.58px;height:17.00px;line-height:17.00px;font-size:15.60px;color:#a3a3a3;letter-spacing:-0.639px;">volume</div>
<div class="t" style="left:590.60px;top:677.38px;height:17.00px;line-height:17.00px;font-size:15.60px;color:#fff;letter-spacing:-0.420px;">b7dfa89e018631346fd37e1a201... - local</div>
<div class="t" style="left:1315.60px;top:676.89px;height:17.00px;line-height:17.00px;font-size:15.20px;color:#d5ecfa;letter-spacing:-0.368px;">Writable</div>
<div class="t" style="left:1392.20px;top:676.89px;height:17.00px;line-height:17.00px;font-size:15.20px;color:#f3f3f3;letter-spacing:-0.229px;">Read-only</div>
<div class="t" style="left:489.80px;top:734.58px;height:17.00px;line-height:17.00px;font-size:15.60px;color:#a3a3a3;letter-spacing:-0.420px;">container</div>
<div class="t" style="left:645.60px;top:735.38px;height:17.00px;line-height:17.00px;font-size:15.60px;color:#fff;letter-spacing:-0.171px;">/movie</div>
<div class="t" style="left:1220.60px;top:734.79px;height:17.00px;line-height:17.00px;font-size:15.20px;color:#f3f3f3;letter-spacing:-0.322px;">Volume</div>
<div class="t" style="left:1292.60px;top:734.79px;height:17.00px;line-height:17.00px;font-size:15.20px;color:#d5ecfa;letter-spacing:-0.117px;">Bind</div>
<div class="t" style="left:484.00px;top:773.58px;height:17.00px;line-height:17.00px;font-size:15.60px;color:#a3a3a3;letter-spacing:-0.381px;">host</div>
<div class="t" style="left:584.00px;top:774.38px;height:17.00px;line-height:17.00px;font-size:15.60px;color:#fff;letter-spacing:-0.328px;">/Volumes/data/media/movie</div>
<div class="t" style="left:1177.40px;top:773.89px;height:17.00px;line-height:17.00px;font-size:15.20px;color:#d5ecfa;letter-spacing:-0.283px;">Writable</div>
<div class="t" style="left:1254.80px;top:773.89px;height:17.00px;line-height:17.00px;font-size:15.20px;color:#f3f3f3;letter-spacing:-0.279px;">Read-only</div>
<div class="t" style="left:489.80px;top:831.58px;height:17.00px;line-height:17.00px;font-size:15.60px;color:#a3a3a3;letter-spacing:-0.420px;">container</div>
<div class="t" style="left:645.60px;top:832.38px;height:17.00px;line-height:17.00px;font-size:15.60px;color:#fff;letter-spacing:-0.132px;">/tv</div>
<div class="t" style="left:1220.60px;top:831.79px;height:17.00px;line-height:17.00px;font-size:15.20px;color:#f3f3f3;letter-spacing:-0.322px;">Volume</div>
<div class="t" style="left:1292.60px;top:831.79px;height:17.00px;line-height:17.00px;font-size:15.20px;color:#d5ecfa;letter-spacing:-0.117px;">Bind</div>
<div class="t" style="left:484.00px;top:870.58px;height:17.00px;line-height:17.00px;font-size:15.60px;color:#a3a3a3;letter-spacing:-0.381px;">host</div>
<div class="t" style="left:584.00px;top:871.38px;height:17.00px;line-height:17.00px;font-size:15.60px;color:#fff;letter-spacing:-0.204px;">/Volumes/data/media/tv</div>
<div class="t" style="left:1177.40px;top:870.89px;height:17.00px;line-height:17.00px;font-size:15.20px;color:#d5ecfa;letter-spacing:-0.283px;">Writable</div>
<div class="t" style="left:1254.80px;top:870.89px;height:17.00px;line-height:17.00px;font-size:15.20px;color:#f3f3f3;letter-spacing:-0.279px;">Read-only</div>
<div class="t" style="left:489.80px;top:928.58px;height:17.00px;line-height:17.00px;font-size:15.60px;color:#a3a3a3;letter-spacing:-0.420px;">container</div>
<div class="t" style="left:645.60px;top:929.38px;height:17.00px;line-height:17.00px;font-size:15.60px;color:#fff;letter-spacing:-0.108px;">/video</div>
<div class="t" style="left:1220.60px;top:928.79px;height:17.00px;line-height:17.00px;font-size:15.20px;color:#f3f3f3;letter-spacing:-0.322px;">Volume</div>
<div class="t" style="left:1292.60px;top:928.79px;height:17.00px;line-height:17.00px;font-size:15.20px;color:#d5ecfa;letter-spacing:-0.117px;">Bind</div>
<div class="t" style="left:484.00px;top:967.58px;height:17.00px;line-height:17.00px;font-size:15.60px;color:#a3a3a3;letter-spacing:-0.381px;">host</div>
<div class="t" style="left:584.00px;top:968.38px;height:17.00px;line-height:17.00px;font-size:15.60px;color:#fff;letter-spacing:-0.274px;">/Volumes/data/media/video</div>
<div class="t" style="left:1177.40px;top:967.89px;height:17.00px;line-height:17.00px;font-size:15.20px;color:#d5ecfa;letter-spacing:-0.283px;">Writable</div>
<div class="t" style="left:1254.80px;top:967.89px;height:17.00px;line-height:17.00px;font-size:15.20px;color:#f3f3f3;letter-spacing:-0.279px;">Read-only</div>
<div class="t" style="left:421.60px;top:1025.64px;height:17.00px;line-height:17.00px;font-size:15.20px;color:#f3f3f3;letter-spacing:-0.156px;">Map additional volume</div>
<div class="t" style="left:619.00px;top:1022.40px;height:35.00px;line-height:35.00px;font-size:23.80px;color:#e2231a;letter-spacing:0.425px;font-family:'Noto Sans CJK SC',sans-serif;-webkit-text-stroke:0;">点击这里进行目录映射</div>
<div class="t" style="left:1473.40px;top:971.90px;height:87.00px;line-height:87.00px;font-size:60.00px;color:#9e9e9e;letter-spacing:1.300px;font-family:'Noto Sans CJK SC',sans-serif;-webkit-text-stroke:0;text-shadow:0 0 2px rgba(0,0,0,.55);">公众号</div>
<div class="t" style="left:1665.00px;top:980.90px;height:70.00px;line-height:70.00px;font-size:48.00px;color:#9e9e9e;font-family:'Noto Sans CJK SC',sans-serif;-webkit-text-stroke:0;text-shadow:0 0 2px rgba(0,0,0,.55);">·</div>
<div class="t" style="left:1725.40px;top:972.40px;height:87.00px;line-height:87.00px;font-size:60.00px;color:#9e9e9e;letter-spacing:5.000px;font-family:'Noto Sans CJK SC',sans-serif;-webkit-text-stroke:0;text-shadow:0 0 2px rgba(0,0,0,.55);">家庭</div>
<div class="t" style="left:1849.60px;top:971.40px;height:87.00px;line-height:87.00px;font-size:60.00px;color:#9e9e9e;letter-spacing:2.070px;font-family:'Noto Sans CJK SC',sans-serif;-webkit-text-stroke:0;text-shadow:0 0 2px rgba(0,0,0,.55);">NAS</div>
<div class="t" style="left:1970.60px;top:972.40px;height:87.00px;line-height:87.00px;font-size:60.00px;color:#9e9e9e;letter-spacing:-0.400px;font-family:'Noto Sans CJK SC',sans-serif;-webkit-text-stroke:0;text-shadow:0 0 2px rgba(0,0,0,.55);">服务</div>
</div>
</body>
</html>
